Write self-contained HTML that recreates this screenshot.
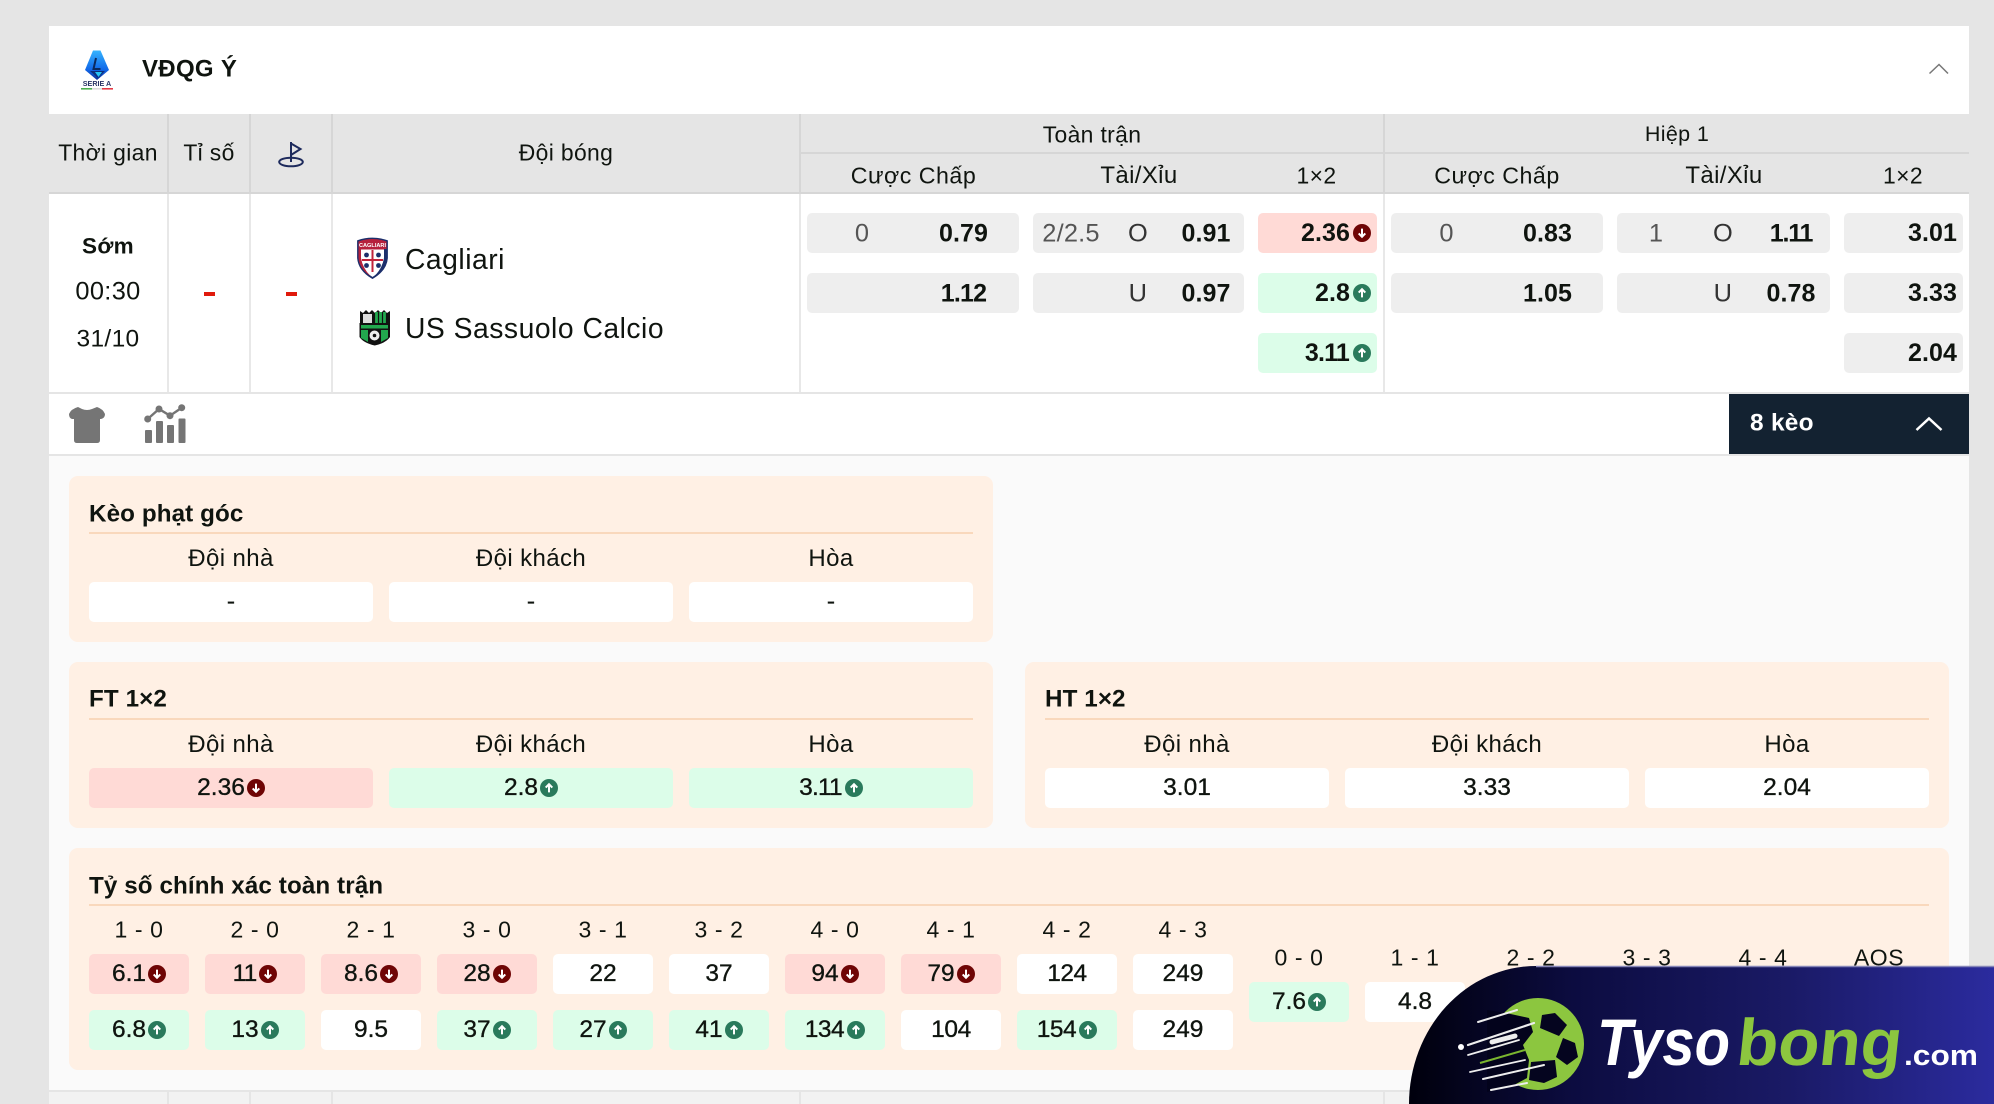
<!DOCTYPE html>
<html lang="vi"><head><meta charset="utf-8"><title>VĐQG Ý</title>
<style>
*{box-sizing:border-box}
html,body{margin:0;padding:0;width:1994px;height:1104px;overflow:hidden;background:#e5e5e5}
body{position:relative;font-family:"Liberation Sans","Noto Sans CJK SC",sans-serif;color:#0f140f}
.r{position:absolute}
.m{position:absolute;transform:translate(-50%,-46%);white-space:nowrap;line-height:1;font-size:22.9px;letter-spacing:.35px}
.n{font-size:25px;font-weight:700;letter-spacing:.1px}
.g{font-size:25.4px;color:#555;letter-spacing:.2px}
.k{font-size:25.4px;color:#333}
.l{font-size:24px;letter-spacing:.4px}
.q{font-size:23px;letter-spacing:.6px}
.b{position:absolute;border-radius:5px;display:flex;align-items:center;justify-content:center;font-size:24.5px;line-height:1;-webkit-text-stroke:.35px #0f140f;height:40px;background:#fff;gap:2px}
.b svg{-webkit-text-stroke:0;flex:none}
.o{background:#eee;justify-content:flex-end;padding-right:6px;font-weight:700;-webkit-text-stroke:0;font-size:25px;gap:3px;letter-spacing:.1px}
.d{background:#ffdad6}.u{background:#dcfde9}
.w{width:284px}.s{width:100px}
.p{position:absolute;background:#fff0e4;border-radius:9px}
.h{position:absolute;background:#f9d8bc;height:2px}
.t{position:absolute;font-weight:700;font-size:24.2px;line-height:1;transform:translateY(-48%);white-space:nowrap;letter-spacing:.1px}
</style></head><body>
<svg width="0" height="0" style="position:absolute"><defs>
<symbol id="dn" viewBox="0 0 18 18"><circle cx="9" cy="9" r="9" fill="#6f0505"/><path d="M9 4.6V12.6M5.7 9.4L9 12.8l3.3-3.4" fill="none" stroke="#fff" stroke-width="2"/></symbol>
<symbol id="up" viewBox="0 0 18 18"><circle cx="9" cy="9" r="9" fill="#2a7a5c"/><path d="M9 13.4V5.4M5.7 8.6L9 5.2l3.3 3.4" fill="none" stroke="#fff" stroke-width="2"/></symbol>
</defs></svg>

<!-- league header -->
<div class="r" style="left:49px;top:26px;width:1920px;height:88px;background:#fff"></div>
<!-- table head -->
<div class="r" style="left:49px;top:114px;width:1920px;height:80px;background:#e5e5e5"></div>
<div class="r" style="left:800px;top:152px;width:1169px;height:2px;background:#d6d6d6"></div>
<div class="r" style="left:49px;top:192px;width:1920px;height:2px;background:#d6d6d6"></div>
<div class="r" style="left:167px;top:114px;width:2px;height:78px;background:#d6d6d6"></div>
<div class="r" style="left:249px;top:114px;width:2px;height:78px;background:#d6d6d6"></div>
<div class="r" style="left:331px;top:114px;width:2px;height:78px;background:#d6d6d6"></div>
<div class="r" style="left:799px;top:114px;width:2px;height:78px;background:#d6d6d6"></div>
<div class="r" style="left:1383px;top:114px;width:2px;height:78px;background:#d6d6d6"></div>
<!-- row -->
<div class="r" style="left:49px;top:194px;width:1920px;height:198px;background:#fff"></div>
<div class="r" style="left:49px;top:392px;width:1920px;height:2px;background:#e5e5e5"></div>
<div class="r" style="left:167px;top:194px;width:2px;height:198px;background:#e8e8e8"></div>
<div class="r" style="left:249px;top:194px;width:2px;height:198px;background:#e8e8e8"></div>
<div class="r" style="left:331px;top:194px;width:2px;height:198px;background:#e8e8e8"></div>
<div class="r" style="left:799px;top:194px;width:2px;height:198px;background:#e8e8e8"></div>
<div class="r" style="left:1383px;top:194px;width:2px;height:198px;background:#e8e8e8"></div>
<!-- sub row -->
<div class="r" style="left:49px;top:394px;width:1920px;height:60px;background:#fff"></div>
<div class="r" style="left:49px;top:454px;width:1920px;height:2px;background:#e5e5e5"></div>
<div class="r" style="left:1729px;top:394px;width:240px;height:60px;background:#132231"></div>
<!-- detail area -->
<div class="r" style="left:49px;top:456px;width:1920px;height:634px;background:#fafafa"></div>
<div class="r" style="left:49px;top:1090px;width:1920px;height:2px;background:#e5e5e5"></div>
<div class="r" style="left:49px;top:1092px;width:1920px;height:12px;background:#f2f2f2"></div>
<div class="r" style="left:167px;top:1092px;width:2px;height:12px;background:#e5e5e5"></div>
<div class="r" style="left:249px;top:1092px;width:2px;height:12px;background:#e5e5e5"></div>
<div class="r" style="left:331px;top:1092px;width:2px;height:12px;background:#e5e5e5"></div>
<div class="r" style="left:799px;top:1092px;width:2px;height:12px;background:#e5e5e5"></div>
<div class="r" style="left:1383px;top:1092px;width:2px;height:12px;background:#e5e5e5"></div>

<!-- league logo + title -->
<svg class="r" style="left:76px;top:44px" width="44" height="50" viewBox="76 44 44 50">
<defs><linearGradient id="sa" x1="0" y1="0" x2="0" y2="1"><stop offset="0" stop-color="#35b4ff"/><stop offset=".65" stop-color="#1167e8"/><stop offset="1" stop-color="#0a2f9c"/></linearGradient></defs>
<path d="M93 50.5h7.5L109 70 97 80 85 70z" fill="url(#sa)"/>
<path d="M96 58l-2.5 11h7" fill="none" stroke="#0b2a5e" stroke-width="2"/>
<path d="M90 71h15l-7 7z" fill="#0d2f7d"/>
<path d="M95 72h7l-3.5 5z" fill="#27c4f5"/>
<text x="97" y="86" font-size="7.2" font-weight="700" text-anchor="middle" fill="#2a3566" font-family="Liberation Sans,sans-serif">SERIE A</text>
<rect x="81" y="88" width="11" height="1.6" fill="#4caf50"/><rect x="92" y="88" width="10" height="1.6" fill="#ddd"/><rect x="102" y="88" width="11" height="1.6" fill="#e53945"/>
</svg>
<div class="t" style="left:142px;top:69px;font-size:24px;letter-spacing:.3px">VĐQG Ý</div>
<svg class="r" style="left:1925px;top:60px" width="28" height="18" viewBox="1925 60 28 18"><path d="M1929.5 73.5L1939 64.5l9 9" fill="none" stroke="#777" stroke-width="1.5"/></svg>

<!-- head labels -->
<div class="m" style="left:108px;top:152px">Thời gian</div>
<div class="m" style="left:209px;top:152px">Tỉ số</div>
<svg class="r" style="left:275px;top:138px" width="34" height="32" viewBox="275 138 34 32"><path d="M291 142V162M291 143.5l9.5 5.5-9.5 6" fill="none" stroke="#1d2a5c" stroke-width="2"/><ellipse cx="291" cy="162" rx="11.8" ry="4.3" fill="none" stroke="#1d2a5c" stroke-width="2"/></svg>
<div class="m" style="left:566px;top:152px">Đội bóng</div>
<div class="m" style="left:1092px;top:134px">Toàn trận</div>
<div class="m" style="left:1677px;top:134px;font-size:21.5px">Hiệp 1</div>
<div class="m" style="left:913.5px;top:175px;font-size:23.2px;letter-spacing:.5px">Cược Chấp</div>
<div class="m" style="left:1139px;top:175px;font-size:24px">Tài/Xỉu</div>
<div class="m" style="left:1316.5px;top:175px">1×2</div>
<div class="m" style="left:1497px;top:175px;font-size:23.2px;letter-spacing:.5px">Cược Chấp</div>
<div class="m" style="left:1724px;top:175px;font-size:24px">Tài/Xỉu</div>
<div class="m" style="left:1903px;top:175px">1×2</div>

<!-- left data -->
<div class="m" style="left:108px;top:246px;font-weight:700;font-size:22.5px">Sớm</div>
<div class="m" style="left:108px;top:291px;font-size:25.4px">00:30</div>
<div class="m" style="left:108px;top:339px;font-size:24.5px">31/10</div>
<div class="r" style="left:203.5px;top:292px;width:11px;height:4px;background:#e01a0c"></div>
<div class="r" style="left:285.5px;top:292px;width:11px;height:4px;background:#e01a0c"></div>

<svg class="r" style="left:355px;top:236px" width="36" height="44" viewBox="355 236 36 44">
<path d="M358 241q14-5 29 0v17q-1 12-14.5 20Q359 270 358 258z" fill="#fff" stroke="#1c2f6b" stroke-width="1.8"/>
<path d="M358.5 241.500q14-5 28 0v8h-28z" fill="#b6213c"/>
<path d="M358.5 249v9q1 11 12 18-8-8-9.500-18v-9z" fill="#b6213c"/>
<path d="M386.5 249v9q-1 11-12 18 8-8 9.500-18v-9z" fill="#1c2f6b"/>
<text x="372.5" y="247" font-size="5.6" font-weight="700" fill="#fff" text-anchor="middle" font-family="Liberation Sans,sans-serif">CAGLIARI</text>
<path d="M372.5 250v22M362 260h21" stroke="#c2243c" stroke-width="2"/>
<circle cx="366.5" cy="255" r="2.4" fill="#1c2f6b"/><circle cx="378.5" cy="255" r="2.4" fill="#1c2f6b"/><circle cx="366.5" cy="265.5" r="2.4" fill="#1c2f6b"/><circle cx="378.5" cy="265.5" r="2.4" fill="#1c2f6b"/>
</svg>
<svg class="r" style="left:356px;top:306px" width="38" height="42" viewBox="356 306 38 42">
<path d="M360 328V311l3 2 3-3 3 3 3-3 3 3 3-3 3 3 3-3 3 3 3-2v17z" fill="#111"/>
<rect x="363" y="314" width="9" height="10" fill="#ddd"/><path d="M376.5 312v12M380.5 312v12M384.5 312v12" stroke="#22a84e" stroke-width="2.8"/>
<path d="M359.5 323h30.5v14q-4 6-15.25 8.500-11.25-2.500-15.25-8.500z" fill="#111"/>
<rect x="361" y="325" width="27" height="3.5" fill="#22a84e"/>
<path d="M361 330v8l7 4v-12zM388 330v8l-7 4v-12z" fill="#22a84e"/>
<circle cx="374.5" cy="335.5" r="5" fill="#eee"/><circle cx="374.5" cy="335.5" r="1.8" fill="#111"/>
</svg>
<div class="m" style="left:405px;top:257.5px;transform:translateY(-46%);font-size:28.3px;letter-spacing:.5px">Cagliari</div>
<div class="m" style="left:405px;top:326.5px;transform:translateY(-46%);font-size:28.3px;letter-spacing:.5px">US Sassuolo Calcio</div>

<!-- odds -->
<div class="b o" style="left:807px;top:213px;width:212px"></div>
<div class="b o" style="left:807px;top:273px;width:212px"></div>
<div class="b o" style="left:1033px;top:213px;width:211px"></div>
<div class="b o" style="left:1033px;top:273px;width:211px"></div>
<div class="b o d" style="left:1258px;top:213px;width:119px">2.36<svg width="18" height="18"><use href="#dn"/></svg></div>
<div class="b o u" style="left:1258px;top:273px;width:119px">2.8<svg width="18" height="18"><use href="#up"/></svg></div>
<div class="b o u" style="left:1258px;top:333px;width:119px;letter-spacing:-.8px">3.11<svg width="18" height="18" style="margin-left:1px"><use href="#up"/></svg></div>
<div class="b o" style="left:1391px;top:213px;width:212px"></div>
<div class="b o" style="left:1391px;top:273px;width:212px"></div>
<div class="b o" style="left:1617px;top:213px;width:213px"></div>
<div class="b o" style="left:1617px;top:273px;width:213px"></div>
<div class="b o" style="left:1844px;top:213px;width:119px">3.01</div>
<div class="b o" style="left:1844px;top:273px;width:119px">3.33</div>
<div class="b o" style="left:1844px;top:333px;width:119px">2.04</div>
<div class="m g" style="left:862px;top:233px">0</div>
<div class="m n" style="left:963.5px;top:233px">0.79</div>
<div class="m n" style="left:963.5px;top:293px;letter-spacing:-.8px">1.12</div>
<div class="m g" style="left:1071px;top:233px">2/2.5</div>
<div class="m k" style="left:1138px;top:233px">O</div>
<div class="m n" style="left:1206px;top:233px">0.91</div>
<div class="m k" style="left:1138px;top:293px">U</div>
<div class="m n" style="left:1206px;top:293px">0.97</div>
<div class="m g" style="left:1446.5px;top:233px">0</div>
<div class="m n" style="left:1547.5px;top:233px">0.83</div>
<div class="m n" style="left:1547.5px;top:293px">1.05</div>
<div class="m g" style="left:1656px;top:233px">1</div>
<div class="m k" style="left:1723px;top:233px">O</div>
<div class="m n" style="left:1791px;top:233px;letter-spacing:-1.2px">1.11</div>
<div class="m k" style="left:1723px;top:293px">U</div>
<div class="m n" style="left:1791px;top:293px">0.78</div>

<!-- sub row icons -->
<svg class="r" style="left:66px;top:404px" width="42" height="42" viewBox="66 404 42 42"><path d="M78 407Q80 408 82 409Q87 411 92 409L97 407Q103 409 105 414Q105 418 101 419H100V440Q100 443 97 443H77Q74 443 74 440V419H72Q69 418 69 414Q71 409 78 407Z" fill="#757575"/></svg>
<svg class="r" style="left:142px;top:402px" width="46" height="44" viewBox="142 402 46 44"><g fill="#757575"><rect x="145" y="430" width="7" height="13" rx="1"/><rect x="156" y="421" width="7" height="22" rx="1"/><rect x="167" y="425" width="7" height="18" rx="1"/><rect x="178.5" y="418.5" width="7" height="24.5" rx="1"/><circle cx="147.7" cy="419" r="3.5"/><circle cx="159" cy="409" r="3.5"/><circle cx="170" cy="415.7" r="3.5"/><circle cx="181.7" cy="407.7" r="3.5"/></g><path d="M147.7 419l11.3-10 11 6.700 11.700-8" fill="none" stroke="#757575" stroke-width="2.4"/></svg>
<div class="m" style="left:1750px;top:423px;transform:translateY(-48%);color:#fff;font-weight:700;font-size:24.4px;letter-spacing:.3px">8 kèo</div>
<svg class="r" style="left:1912px;top:412px" width="34" height="24" viewBox="1912 412 34 24"><path d="M1916.5 430l12.5-11.5L1941.5 430" fill="none" stroke="#fff" stroke-width="2.5"/></svg>

<!-- panels -->
<div class="p" style="left:69px;top:476px;width:924px;height:166px"></div>
<div class="t" style="left:89px;top:514px">Kèo phạt góc</div>
<div class="h" style="left:89px;top:532px;width:884px"></div>
<div class="m l" style="left:231px;top:558px">Đội nhà</div>
<div class="m l" style="left:531px;top:558px">Đội khách</div>
<div class="m l" style="left:831px;top:558px">Hòa</div>
<div class="b w" style="left:89px;top:582px">-</div>
<div class="b w" style="left:389px;top:582px">-</div>
<div class="b w" style="left:689px;top:582px">-</div>

<div class="p" style="left:69px;top:662px;width:924px;height:166px"></div>
<div class="t" style="left:89px;top:699px">FT 1×2</div>
<div class="h" style="left:89px;top:718px;width:884px"></div>
<div class="m l" style="left:231px;top:744px">Đội nhà</div>
<div class="m l" style="left:531px;top:744px">Đội khách</div>
<div class="m l" style="left:831px;top:744px">Hòa</div>
<div class="b w d" style="left:89px;top:768px">2.36<svg width="18" height="18"><use href="#dn"/></svg></div>
<div class="b w u" style="left:389px;top:768px">2.8<svg width="18" height="18"><use href="#up"/></svg></div>
<div class="b w u" style="left:689px;top:768px;letter-spacing:-.8px">3.11<svg width="18" height="18" style="margin-left:1px"><use href="#up"/></svg></div>

<div class="p" style="left:1025px;top:662px;width:924px;height:166px"></div>
<div class="t" style="left:1045px;top:699px">HT 1×2</div>
<div class="h" style="left:1045px;top:718px;width:884px"></div>
<div class="m l" style="left:1187px;top:744px">Đội nhà</div>
<div class="m l" style="left:1487px;top:744px">Đội khách</div>
<div class="m l" style="left:1787px;top:744px">Hòa</div>
<div class="b w" style="left:1045px;top:768px">3.01</div>
<div class="b w" style="left:1345px;top:768px">3.33</div>
<div class="b w" style="left:1645px;top:768px">2.04</div>

<div class="p" style="left:69px;top:848px;width:1880px;height:222px"></div>
<div class="t" style="left:89px;top:886px">Tỷ số chính xác toàn trận</div>
<div class="h" style="left:89px;top:904px;width:1840px"></div>
<div class="m q" style="left:139px;top:929px">1 - 0</div>
<div class="m q" style="left:255px;top:929px">2 - 0</div>
<div class="m q" style="left:371px;top:929px">2 - 1</div>
<div class="m q" style="left:487px;top:929px">3 - 0</div>
<div class="m q" style="left:603px;top:929px">3 - 1</div>
<div class="m q" style="left:719px;top:929px">3 - 2</div>
<div class="m q" style="left:835px;top:929px">4 - 0</div>
<div class="m q" style="left:951px;top:929px">4 - 1</div>
<div class="m q" style="left:1067px;top:929px">4 - 2</div>
<div class="m q" style="left:1183px;top:929px">4 - 3</div>
<div class="m q" style="left:1299px;top:957px">0 - 0</div>
<div class="m q" style="left:1415px;top:957px">1 - 1</div>
<div class="m q" style="left:1531px;top:957px">2 - 2</div>
<div class="m q" style="left:1647px;top:957px">3 - 3</div>
<div class="m q" style="left:1763px;top:957px">4 - 4</div>
<div class="m q" style="left:1879px;top:957px">AOS</div>

<div class="b s d" style="left:89px;top:954px">6.1<svg width="18" height="18"><use href="#dn"/></svg></div>
<div class="b s d" style="left:205px;top:954px;letter-spacing:-.8px">11<svg width="18" height="18" style="margin-left:1px"><use href="#dn"/></svg></div>
<div class="b s d" style="left:321px;top:954px">8.6<svg width="18" height="18"><use href="#dn"/></svg></div>
<div class="b s d" style="left:437px;top:954px">28<svg width="18" height="18"><use href="#dn"/></svg></div>
<div class="b s" style="left:553px;top:954px">22</div>
<div class="b s" style="left:669px;top:954px">37</div>
<div class="b s d" style="left:785px;top:954px">94<svg width="18" height="18"><use href="#dn"/></svg></div>
<div class="b s d" style="left:901px;top:954px">79<svg width="18" height="18"><use href="#dn"/></svg></div>
<div class="b s" style="left:1017px;top:954px;letter-spacing:-.5px">124</div>
<div class="b s" style="left:1133px;top:954px">249</div>
<div class="b s u" style="left:89px;top:1010px">6.8<svg width="18" height="18"><use href="#up"/></svg></div>
<div class="b s u" style="left:205px;top:1010px">13<svg width="18" height="18"><use href="#up"/></svg></div>
<div class="b s" style="left:321px;top:1010px">9.5</div>
<div class="b s u" style="left:437px;top:1010px">37<svg width="18" height="18"><use href="#up"/></svg></div>
<div class="b s u" style="left:553px;top:1010px">27<svg width="18" height="18"><use href="#up"/></svg></div>
<div class="b s u" style="left:669px;top:1010px">41<svg width="18" height="18"><use href="#up"/></svg></div>
<div class="b s u" style="left:785px;top:1010px;letter-spacing:-.5px">134<svg width="18" height="18" style="margin-left:1px"><use href="#up"/></svg></div>
<div class="b s" style="left:901px;top:1010px;letter-spacing:-.4px">104</div>
<div class="b s u" style="left:1017px;top:1010px;letter-spacing:-.5px">154<svg width="18" height="18" style="margin-left:1px"><use href="#up"/></svg></div>
<div class="b s" style="left:1133px;top:1010px">249</div>
<div class="b s u" style="left:1249px;top:982px">7.6<svg width="18" height="18"><use href="#up"/></svg></div>
<div class="b s" style="left:1365px;top:982px">4.8</div>

<!-- watermark -->
<svg class="r" style="left:0;top:0" width="1994" height="1104" viewBox="0 0 1994 1104">
<defs><linearGradient id="bn" x1="0" y1="0" x2="1" y2="0"><stop offset="0" stop-color="#00000c"/><stop offset=".28" stop-color="#0c0c40"/><stop offset=".65" stop-color="#1a1a66"/><stop offset="1" stop-color="#2b2b9e"/></linearGradient></defs>
<path d="M1409 1104A127 138 0 0 1 1536 966H1994V1104Z" fill="url(#bn)"/>
<path d="M1536 966.5H1994" stroke="#8585b8" stroke-width="1.5"/>
<circle cx="1538" cy="1044" r="46" fill="#8cc63f"/>
<path d="M1487 1010L1506 1013 1529 1018 1533 1032 1523 1045 1529 1060 1527 1078 1514 1085 1487 1092Z" fill="#03031c"/>
<path d="M1542 1015L1555 1013 1567 1025 1559 1036 1540 1028ZM1563 1038L1575 1043 1578 1057 1567 1065 1556 1057ZM1531 1062L1555 1060 1557 1077 1544 1083 1529 1080Z" fill="#05051f"/>
<g stroke="#eee" stroke-linecap="round" fill="none"><path d="M1478 1022L1517 1010" stroke-width="2"/><path d="M1468 1045L1534 1023" stroke-width="2.2"/><path d="M1468 1055L1519 1040" stroke-width="1.8"/><path d="M1470 1072L1525 1060" stroke-width="1.8"/><path d="M1483 1079L1544 1065" stroke-width="2"/><path d="M1491 1090L1527 1083" stroke-width="2"/><path d="M1492 1042L1515 1036" stroke-width="5"/></g>
<path d="M1480 1063L1525 1050" stroke="#7ab52f" stroke-width="2"/>
<circle cx="1461" cy="1047" r="3" fill="#fff"/>
<g font-family="Liberation Sans,sans-serif" font-weight="700">
<text x="1597" y="1065" font-size="66" fill="#fff" textLength="133" lengthAdjust="spacingAndGlyphs" font-style="italic">Tyso</text>
<text x="1847" y="1065" font-size="66" fill="#8cc63f" textLength="165" lengthAdjust="spacingAndGlyphs" transform="skewX(-6)">bong</text>
<text x="1904" y="1065" font-size="29" fill="#fff" textLength="74" lengthAdjust="spacingAndGlyphs">.com</text>
</g>
</svg>
</body></html>
